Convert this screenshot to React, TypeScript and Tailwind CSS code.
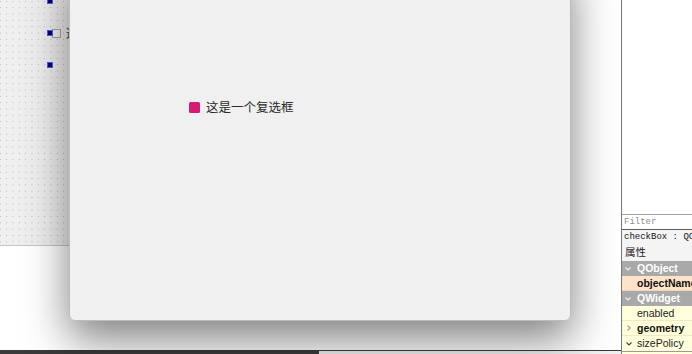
import React from "react";

const Chevron = ({ dir, color }: { dir: "down" | "right"; color: string }) => (
  <svg width="8" height="8" viewBox="0 0 8 8" className="shrink-0">
    {dir === "down" ? (
      <polyline points="1.5,2.5 4,5 6.5,2.5" fill="none" stroke={color} strokeWidth="1.1" />
    ) : (
      <polyline points="2.5,1.5 5,4 2.5,6.5" fill="none" stroke={color} strokeWidth="1.1" />
    )}
  </svg>
);

export default function App() {
  return (
    <div
      className="relative w-[692px] h-[354px] overflow-hidden bg-white flex"
      style={{ fontFamily: '"Liberation Sans", "Noto Sans CJK SC", sans-serif' }}
    >
      {/* left: designer canvas */}
      <div className="flex flex-col w-[621px] h-full">
        <div className="flex-1 bg-white">
          <div className="relative w-[560px] h-[246px] border-b border-[#c4c4c4] bg-[#efefef] bg-[radial-gradient(circle,#b0b0b0_0.55px,transparent_0.9px)] bg-[length:6.33px_6.33px] bg-[position:3.5px_-1.8px]">
            <div className="absolute left-[48px] top-[-1px] w-[4px] h-[4px] bg-[#000080] outline outline-1 outline-[#5a5ad8]" />
            <div className="absolute left-[48px] top-[30.5px] w-[4px] h-[4px] bg-[#000080] outline outline-1 outline-[#5a5ad8]" />
            <div className="absolute left-[48px] top-[62.5px] w-[4px] h-[4px] bg-[#000080] outline outline-1 outline-[#5a5ad8]" />
            <div className="flex items-center gap-[5px] pl-[52px] pt-[28px]">
              <div className="w-[9px] h-[9px] border-[1.5px] border-[#a6a6a6] bg-[#f4f4f4]" />
              <span className="text-[12px] leading-[10px] text-[#5a3a2a]" style={{ fontFamily: '"Noto Sans CJK SC", sans-serif' }}>
                这是一个复选框
              </span>
            </div>
          </div>
        </div>
        {/* bottom bar */}
        <div className="h-[4px] flex">
          <div className="w-[318px] bg-[#3a3a3a]" />
          <div className="flex-1 bg-[#f0f0f0] border-t border-l border-[#3a3a3a]" />
        </div>
      </div>

      {/* right: property editor */}
      <div className="w-[71px] h-full border-l border-[#7a7a7a] flex flex-col bg-white">
        <div className="h-[214px] bg-white" />
        <div className="h-[15px] border-t border-[#a0a0a0] bg-white pl-[2px] flex items-center">
          <span className="text-[9px] leading-none text-[#909090]" style={{ fontFamily: '"Liberation Mono", monospace' }}>
            Filter
          </span>
        </div>
        <div className="h-[15px] border-t border-[#5a5a5a] bg-[#f4f4f4] pl-[2px] pt-[1px] flex items-center whitespace-nowrap overflow-hidden">
          <span className="text-[9px] leading-none text-[#111]" style={{ fontFamily: '"Liberation Mono", monospace' }}>
            checkBox : QCheckBox
          </span>
        </div>
        <div className="h-[17px] bg-[#f4f4f4] pl-[3px] flex items-center">
          <span className="text-[10.5px] leading-none text-[#222]" style={{ fontFamily: '"Noto Sans CJK SC", sans-serif' }}>
            属性
          </span>
        </div>
        {/* QObject header */}
        <div className="h-[15px] bg-[#a9a9a9] flex items-center pl-[2px] gap-[5px] whitespace-nowrap">
          <Chevron dir="down" color="#efefef" />
          <span className="text-[10.5px] font-bold text-white leading-none">QObject</span>
        </div>
        <div className="h-[15px] bg-[#fde4c9] flex items-center pl-[15px] whitespace-nowrap overflow-hidden border-b border-[#f0d6b8]">
          <span className="text-[10.5px] font-bold text-[#111] leading-none">objectName</span>
        </div>
        {/* QWidget header */}
        <div className="h-[15px] bg-[#a9a9a9] flex items-center pl-[2px] gap-[5px] whitespace-nowrap">
          <Chevron dir="down" color="#efefef" />
          <span className="text-[10.5px] font-bold text-white leading-none">QWidget</span>
        </div>
        <div className="h-[15px] bg-[#ffffdc] flex items-center pl-[15px] whitespace-nowrap overflow-hidden border-b border-[#ececc4]">
          <span className="text-[10.5px] text-[#222] leading-none">enabled</span>
        </div>
        <div className="h-[15px] bg-[#ffffdc] flex items-center pl-[3px] gap-[4px] whitespace-nowrap overflow-hidden border-b border-[#ececc4]">
          <Chevron dir="right" color="#9a9a9a" />
          <span className="text-[10.5px] font-bold text-[#111] leading-none">geometry</span>
        </div>
        <div className="h-[16px] bg-[#ffffdc] flex items-center pl-[3px] gap-[4px] whitespace-nowrap overflow-hidden border-b border-[#9a9a9a]">
          <Chevron dir="down" color="#444" />
          <span className="text-[10.5px] text-[#222] leading-none">sizePolicy</span>
        </div>
        <div className="flex-1 bg-[#ffffdc]" />
      </div>

      {/* floating preview window */}
      <div className="absolute left-[69px] top-[-40px] w-[502px] h-[361px] bg-[#f0f0f0] border border-[#bdbdbd] rounded-[6px] shadow-[0_18px_44px_rgba(0,0,0,0.5)]">
        <div className="flex items-center gap-[6px] pl-[119px] pt-[140px]">
          <div className="w-[11px] h-[11px] rounded-[1.5px] bg-[#d81b72]" />
          <span className="text-[12.5px] leading-none text-[#2a2a2a]" style={{ fontFamily: '"Noto Sans CJK SC", sans-serif' }}>
            这是一个复选框
          </span>
        </div>
      </div>
    </div>
  );
}
